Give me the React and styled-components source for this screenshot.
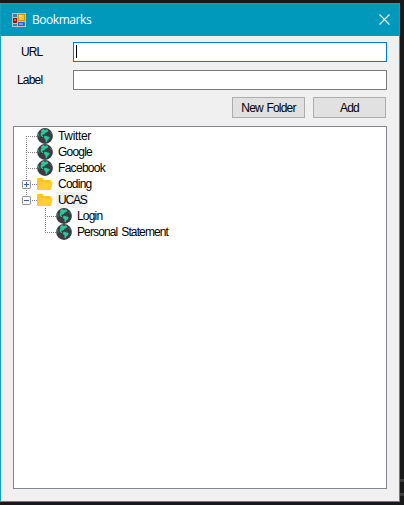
import React from "react";
import styled, { createGlobalStyle } from "styled-components";

const GlobalStyle = createGlobalStyle`
  * { box-sizing: border-box; }
  body {
    margin: 0;
    overflow: hidden;
    background: #191919;
    font: 12px/16px "Liberation Sans", Arial, sans-serif;
    color: #000;
  }
`;

const Desktop = styled.div`
  height: 505px;
  padding-top: 3px;
  background:
    linear-gradient(#454545, #353535) 400px 479px / 4px 3px no-repeat,
    linear-gradient(#454545, #353535) 400px 493px / 4px 3px no-repeat,
    #191919;
`;

const Window = styled.main`
  display: flex;
  flex-direction: column;
  width: 400px;
  height: 499px;
  border: 1px solid #14a0bf;
  border-top: 0;
  background: #f0f0f0;
`;

const TitleBar = styled.header`
  display: flex;
  align-items: center;
  height: 33px;
  flex: none;
  padding: 0 9px 0 11px;
  background: #0099bc;
  border-top: 1px solid #14a0bf;
  color: #fff;
`;

const Title = styled.h1`
  flex: 1;
  margin: 0 0 0 6px;
  font: 12px/16px "Open Sans", "Noto Sans", sans-serif;
  letter-spacing: ${(p) => p.$spacing}px;
`;

const CloseIcon = styled.svg`
  display: block;
  width: 11px;
  height: 11px;
  margin-bottom: 1px;
`;

const Content = styled.section`
  display: flex;
  flex-direction: column;
  padding: 6px 12px 12px;
  flex: 1;
`;

const Field = styled.label`
  display: flex;
  align-items: center;
  height: 20px;
  margin-bottom: 8px;
`;

const FieldName = styled.span`
  width: 60px;
  padding-left: ${(p) => p.$indent}px;
  letter-spacing: ${(p) => p.$spacing}px;
`;

const TextBox = styled.span`
  display: block;
  width: 314px;
  height: 20px;
  padding: 2px;
  border: 1px solid ${(p) => (p.$focused ? "#0078d7" : "#7a7a7a")};
  background: #fff;
`;

const Caret = styled.span`
  display: block;
  width: 1px;
  height: 13px;
  background: #000;
`;

const Actions = styled.div`
  display: flex;
  justify-content: flex-end;
  gap: 8px;
  margin: -1px 1px 8px 0;
`;

const Button = styled.button`
  width: 73px;
  height: 21px;
  padding: 0;
  border: 1px solid #adadad;
  background: #e1e1e1;
  color: #000;
  font: 12px/18px "Liberation Sans", Arial, sans-serif;
  word-spacing: 1px;
  letter-spacing: ${(p) => p.$spacing}px;
`;

const Tree = styled.ul`
  width: 374px;
  height: 363px;
  margin: 0;
  padding: 1px 0 0 8px;
  border: 1px solid #828790;
  background: #fff;
  list-style: none;
`;

const TreeRow = styled.li`
  display: flex;
  height: 16px;
  align-items: center;
  padding-left: ${(p) => (p.$nested ? 19 : 0)}px;
`;

const Connector = styled.svg`
  display: block;
  width: 15px;
  height: 16px;
  flex: none;
`;

const ItemIcon = styled.svg`
  display: block;
  width: 16px;
  height: 16px;
  flex: none;
`;

const ItemLabel = styled.span`
  height: 16px;
  margin-left: 3px;
  padding: 0 1px 0 2px;
  line-height: 16px;
  word-spacing: 1.5px;
  letter-spacing: ${(p) => p.$spacing}px;
  background: ${(p) => (p.$selected ? "#f0f0f0" : "transparent")};
`;

const AppIcon = () => (
  <svg width="14" height="14" viewBox="0 0 14 14" shapeRendering="crispEdges">
    <path d="M0 0h14v14H0z" fill="#b9c5cb" />
    <path d="M1 1h4v3H1zM1 11h4v2H1zM12 9h1v4h-1z" fill="#218fac" />
    <path d="M6 1h7v7H6z" fill="#d29400" />
    <path d="M7 2h5v5H7z" fill="#ffc628" />
    <path d="M7 2h3v2H7z" fill="#ffe37b" />
    <path d="M1 5h4v5H1z" fill="#9b1313" />
    <path d="M2 6h2v2H2z" fill="#ed5a45" />
    <path d="M6 9h6v4H6z" fill="#315fca" />
    <path d="M7 10h4v2H7z" fill="#739bf0" />
  </svg>
);

const Globe = () => (
  <ItemIcon viewBox="0 0 16 16">
    <circle cx="8" cy="8" r="7.9" fill="#3c3c42" />
    <path d="m4.2 2.2 2.2-1.1L7.8 2 10 1.3l1.3 1.2-.9 1.5-1.8.7-1 1.6-1.8.2-.5 1.2 1.2 1-.7.6-1.8-1.3-.5-2 .8-1.3Z" fill="#2bc79b" />
    <path d="m7.3 8.1 1.9-.4 1.5.9 1.9.5-.5 2-1.5.9-.8 2-1.1.2-.1-2.5-1.5-1.6Z" fill="#2bc79b" />
    <path d="m.6 6.1.9-1.6.4 2.2.9 1.6-.5.8-1.7-1.5Z" fill="#258e78" />
    <path d="m13.3 3.2 1.3 1.6.3 1.4-1.1-.5Z" fill="#258e78" />
  </ItemIcon>
);

const Folder = () => (
  <ItemIcon viewBox="0 0 16 16">
    <path d="M0 3q0-1 1-1h4.3L7 4h6q1 0 1 1v8q0 1-1 1H1q-1 0-1-1Z" fill="#ffc423" />
    <path d="M3 6h12.2q.7 0 .5.7L14 13q-.3 1-1.3 1H.7Z" fill="#ffcd36" />
  </ItemIcon>
);

const Branch = ({ item }) => (
  <Connector viewBox="0 0 15 16">
    <path
      d={`M4.5 ${item.first ? 8 : 0}V${item.last ? 9 : 16}M6 8.5h9`}
      stroke="#808080"
      strokeDasharray="1 1"
    />
    {item.expander && (
      <>
        <rect x=".5" y="4.5" width="8" height="8" rx=".7" fill="#f8f8f8" stroke="#919191" />
        <path d={`M2 8.5h5${item.expander === "plus" ? "M4.5 6v5" : ""}`} stroke="#4059a5" />
      </>
    )}
  </Connector>
);

const items = [
  { text: "Twitter", first: true, spacing: -0.35 },
  { text: "Google", spacing: -0.8 },
  { text: "Facebook", spacing: -0.7 },
  { text: "Coding", folder: true, expander: "plus", spacing: -0.75 },
  { text: "UCAS", folder: true, expander: "minus", last: true, selected: true, spacing: -1.2 },
  { text: "Login", nested: true, spacing: -0.8 },
  { text: "Personal Statement", nested: true, last: true, spacing: -0.88 },
];

export default function App() {
  return (
    <>
      <GlobalStyle />
      <Desktop>
        <Window>
          <TitleBar>
            <AppIcon />
            <Title $spacing={-0.45}>Bookmarks</Title>
            <CloseIcon viewBox="0 0 11 11" aria-label="Close">
              <path d="m.5.5 10 10m0-10-10 10" stroke="#fff" strokeWidth="1.1" />
            </CloseIcon>
          </TitleBar>
          <Content>
            <Field>
              <FieldName $indent={8} $spacing={-0.9}>URL</FieldName>
              <TextBox $focused><Caret /></TextBox>
            </Field>
            <Field>
              <FieldName $indent={4} $spacing={-0.8}>Label</FieldName>
              <TextBox />
            </Field>
            <Actions>
              <Button $spacing={-0.8}>New Folder</Button>
              <Button $spacing={-0.8}>Add</Button>
            </Actions>
            <Tree>
              {items.map((item) => (
                <TreeRow key={item.text} $nested={item.nested}>
                  <Branch item={item} />
                  {item.folder ? <Folder /> : <Globe />}
                  <ItemLabel $selected={item.selected} $spacing={item.spacing}>
                    {item.text}
                  </ItemLabel>
                </TreeRow>
              ))}
            </Tree>
          </Content>
        </Window>
      </Desktop>
    </>
  );
}
